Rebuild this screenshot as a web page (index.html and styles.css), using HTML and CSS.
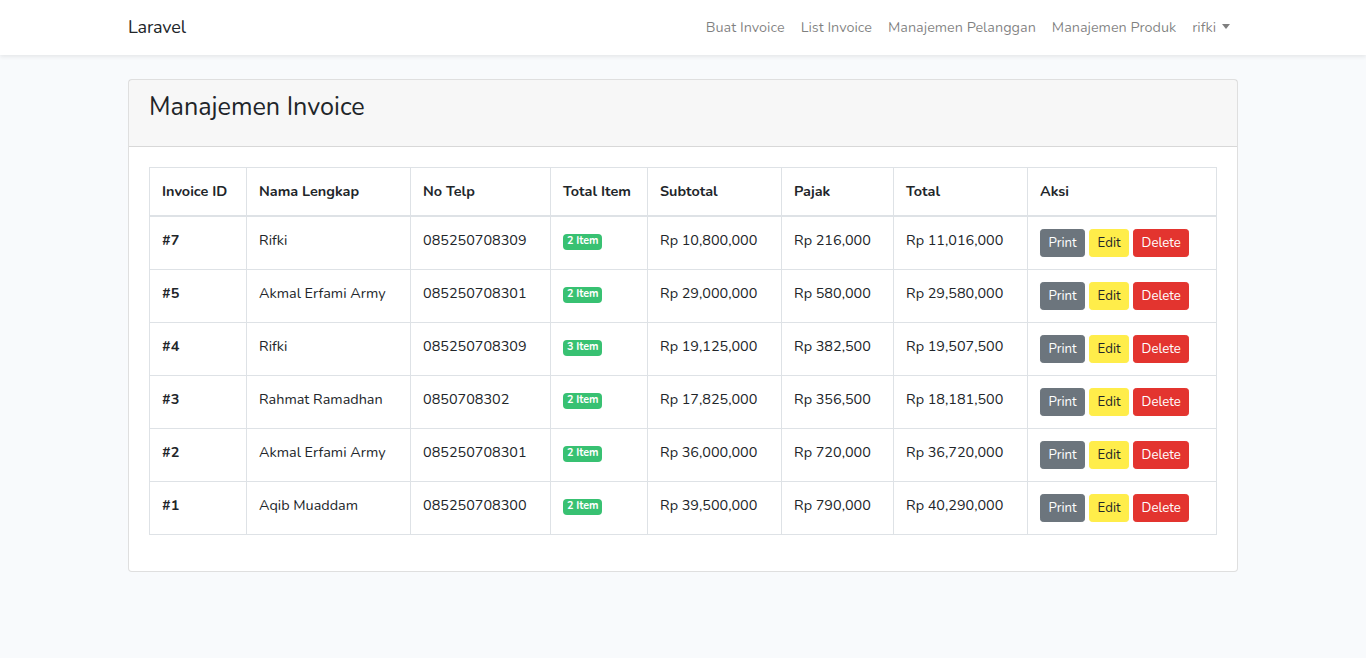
FILE: index.html
```html
<!DOCTYPE html>
<html lang="id">
<head>
<meta charset="utf-8">
<title>Laravel</title>
<link rel="stylesheet" href="styles.css">
</head>
<body>
<nav class="navbar">
  <div class="container nav-inner">
    <a class="brand" href="#">Laravel</a>
    <ul class="nav-links">
      <li><a href="#">Buat Invoice</a></li>
      <li><a href="#">List Invoice</a></li>
      <li><a href="#">Manajemen Pelanggan</a></li>
      <li><a href="#">Manajemen Produk</a></li>
      <li><a href="#" class="dropdown">rifki</a></li>
    </ul>
  </div>
</nav>
<main class="main">
  <div class="container">
    <div class="card">
      <div class="card-header"><h3>Manajemen Invoice</h3></div>
      <div class="card-body">
        <table class="table">
          <colgroup>
            <col class="c1"><col class="c2"><col class="c3"><col class="c4"><col class="c5"><col class="c6"><col class="c7"><col class="c8">
          </colgroup>
          <thead>
            <tr><th>Invoice ID</th><th>Nama Lengkap</th><th>No Telp</th><th>Total Item</th><th>Subtotal</th><th>Pajak</th><th>Total</th><th>Aksi</th></tr>
          </thead>
          <tbody>
            <tr><td><strong>#7</strong></td><td>Rifki</td><td>085250708309</td><td><span class="badge">2 Item</span></td><td>Rp 10,800,000</td><td>Rp 216,000</td><td>Rp 11,016,000</td><td class="actions"><button class="btn btn-print">Print</button><button class="btn btn-edit">Edit</button><button class="btn btn-delete">Delete</button></td></tr>
            <tr><td><strong>#5</strong></td><td>Akmal Erfami Army</td><td>085250708301</td><td><span class="badge">2 Item</span></td><td>Rp 29,000,000</td><td>Rp 580,000</td><td>Rp 29,580,000</td><td class="actions"><button class="btn btn-print">Print</button><button class="btn btn-edit">Edit</button><button class="btn btn-delete">Delete</button></td></tr>
            <tr><td><strong>#4</strong></td><td>Rifki</td><td>085250708309</td><td><span class="badge">3 Item</span></td><td>Rp 19,125,000</td><td>Rp 382,500</td><td>Rp 19,507,500</td><td class="actions"><button class="btn btn-print">Print</button><button class="btn btn-edit">Edit</button><button class="btn btn-delete">Delete</button></td></tr>
            <tr><td><strong>#3</strong></td><td>Rahmat Ramadhan</td><td>0850708302</td><td><span class="badge">2 Item</span></td><td>Rp 17,825,000</td><td>Rp 356,500</td><td>Rp 18,181,500</td><td class="actions"><button class="btn btn-print">Print</button><button class="btn btn-edit">Edit</button><button class="btn btn-delete">Delete</button></td></tr>
            <tr><td><strong>#2</strong></td><td>Akmal Erfami Army</td><td>085250708301</td><td><span class="badge">2 Item</span></td><td>Rp 36,000,000</td><td>Rp 720,000</td><td>Rp 36,720,000</td><td class="actions"><button class="btn btn-print">Print</button><button class="btn btn-edit">Edit</button><button class="btn btn-delete">Delete</button></td></tr>
            <tr><td><strong>#1</strong></td><td>Aqib Muaddam</td><td>085250708300</td><td><span class="badge">2 Item</span></td><td>Rp 39,500,000</td><td>Rp 790,000</td><td>Rp 40,290,000</td><td class="actions"><button class="btn btn-print">Print</button><button class="btn btn-edit">Edit</button><button class="btn btn-delete">Delete</button></td></tr>
          </tbody>
        </table>
      </div>
    </div>
  </div>
</main>
</body>
</html>
```
FILE: styles.css
```css
* { box-sizing: border-box; }
html, body { margin: 0; }
body {
  background: #f8fafc;
  font-family: "Nunito", "Lato", "Open Sans", sans-serif;
  font-size: 14.4px;
  line-height: 1.6;
  color: #212529;
}
a { text-decoration: none; }
.container {
  width: 1140px;
  margin: 0 auto;
  padding: 0 15px;
}
.navbar {
  background: #fff;
  box-shadow: 0 2px 4px rgba(0,0,0,0.075);
  padding: 8px 0;
  height: 55px;
}
.nav-inner {
  display: flex;
  align-items: center;
  justify-content: space-between;
  height: 39px;
}
.brand {
  color: #212529;
  font-size: 18px;
  line-height: 28.8px;
  letter-spacing: -0.2px;
}
.nav-links {
  list-style: none;
  display: flex;
  margin: 0;
  padding: 0;
}
.nav-links a {
  display: block;
  padding: 8px 8px;
  color: rgba(0,0,0,0.5);
  font-size: 14.4px;
}
.dropdown::after {
  content: "";
  display: inline-block;
  margin-left: 6px;
  vertical-align: 3px;
  border-top: 5px solid;
  border-left: 4.5px solid transparent;
  border-right: 4.5px solid transparent;
}
.main { padding: 24px 0; }
.card {
  background: #fff;
  border: 1px solid rgba(0,0,0,0.125);
  border-radius: 4px;
}
.card-header {
  background: rgba(0,0,0,0.03);
  border-bottom: 1px solid rgba(0,0,0,0.125);
  padding: 12px 20px;
  height: 67px;
}
.card-header h3 {
  margin: 0;
  font-weight: 400;
  font-size: 25.2px;
  line-height: 30px;
}
.card-body { padding: 20px 20px 20px; }
.table {
  width: 1067px;
  border-collapse: collapse;
  margin-bottom: 16px;
  table-layout: fixed;
}
.c1 { width: 97px; }
.c2 { width: 164px; }
.c3 { width: 140px; }
.c4 { width: 97px; }
.c5 { width: 134px; }
.c6 { width: 112px; }
.c7 { width: 134px; }
.c8 { width: 189px; }
.table th, .table td {
  border: 1px solid #dee2e6;
  padding: 12px;
  text-align: left;
  vertical-align: top;
}
.table th {
  font-weight: 700;
  border-bottom-width: 2px;
}
.badge {
  display: inline-block;
  background: #38c172;
  color: #fff;
  font-size: 10.8px;
  font-weight: 700;
  line-height: 1;
  padding: 2px 4px 3px;
  border-radius: 4px;
  vertical-align: 1px;
  letter-spacing: -0.1px;
}
.actions { white-space: nowrap; line-height: 28px; }
.btn {
  font-family: inherit;
  font-size: 13.2px;
  line-height: 18px;
  height: 28px;
  padding: 4px 7.5px;
  border: 1px solid transparent;
  border-radius: 3.2px;
  margin: 0 4px 0 0;
  cursor: pointer;
  vertical-align: top;
}
.btn-print { background: #6c757d; border-color: #6c757d; color: #fff; }
.btn-edit { background: #ffed4a; border-color: #ffed4a; color: #212529; }
.btn-delete { background: #e3342f; border-color: #e3342f; color: #fff; }
```
